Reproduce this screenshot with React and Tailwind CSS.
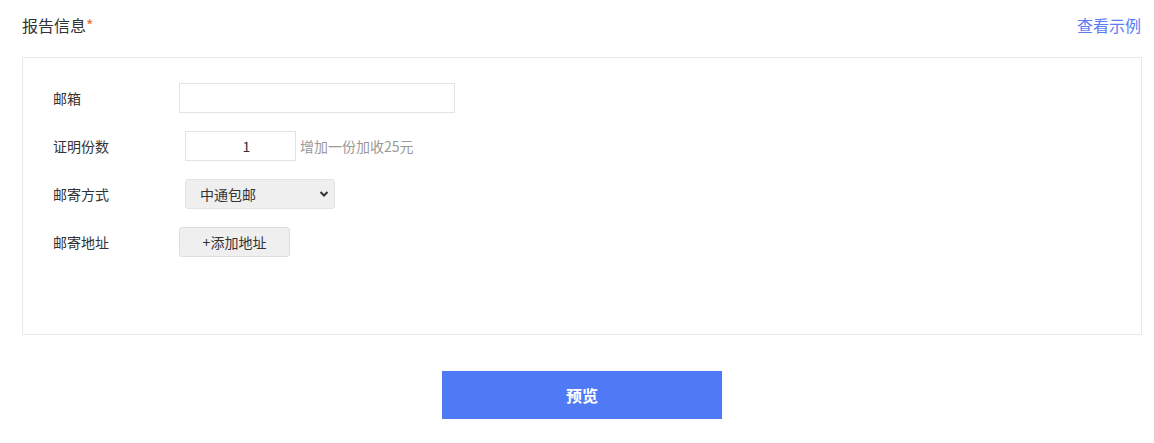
import React, { useState } from 'react';

const FONT = { fontFamily: '"Noto Sans CJK SC", "Microsoft YaHei", sans-serif' };

const Row = ({ label, children }) => (
  <div className="flex items-center h-[48px]">
    <div className="w-[126px] shrink-0 text-[14px] text-[#333]">{label}</div>
    <div className="flex items-center">{children}</div>
  </div>
);

export default function App() {
  const [email, setEmail] = useState('');
  const [count, setCount] = useState('1');
  const [method, setMethod] = useState('zto');

  return (
    <div className="w-[1154px] h-[443px] bg-white" style={FONT}>
      <div className="pl-[22px] pr-[12px]">
        <div className="flex items-center justify-between h-[48px] pt-[1px]">
          <h2 className="text-[16px] text-[#333]">
            报告信息<span className="text-[#f5692c]">*</span>
          </h2>
          <a className="text-[16px] text-[#5b7cf5] cursor-pointer mr-[1px]">查看示例</a>
        </div>

        <div className="mt-[9px] h-[278px] border border-[#e8e8e8] pl-[30px] pt-[16px]">
          <Row label="邮箱">
            <input
              type="text"
              value={email}
              onChange={(e) => setEmail(e.target.value)}
              className="w-[276px] h-[30px] border border-[#e3e3e3] px-2 text-[14px] outline-none"
            />
          </Row>

          <Row label="证明份数">
            <input
              type="text"
              value={count}
              onChange={(e) => setCount(e.target.value)}
              className="ml-[6px] w-[111px] h-[30px] border border-[#e3e3e3] pl-[12px] text-center text-[14px] text-[#333] outline-none"
            />
            <span className="ml-[4px] text-[14px] text-[#999]">增加一份加收25元</span>
          </Row>

          <Row label="邮寄方式">
            <div className="relative ml-[6px]">
              <select
                value={method}
                onChange={(e) => setMethod(e.target.value)}
                className="appearance-none w-[150px] h-[30px] bg-[#efefef] border border-[#e3e3e3] rounded-[3px] pl-[14px] text-[14px] text-[#333] outline-none"
              >
                <option value="zto">中通包邮</option>
                <option value="sf">顺丰到付</option>
              </select>
              <svg
                className="absolute right-[6px] top-[11px] pointer-events-none"
                width="10"
                height="8"
                viewBox="0 0 10 8"
              >
                <path d="M1.5 2 L5 5.5 L8.5 2" fill="none" stroke="#333" strokeWidth="2" />
              </svg>
            </div>
          </Row>

          <Row label="邮寄地址">
            <button className="w-[111px] h-[30px] bg-[#efefef] border border-[#dedede] rounded-[3px] text-[14px] text-[#333]">
              +添加地址
            </button>
          </Row>
        </div>

        <div className="flex justify-center mt-[36px]">
          <button className="w-[280px] h-[48px] bg-[#5079f5] text-white text-[16px] font-bold">
            预览
          </button>
        </div>
      </div>
    </div>
  );
}
